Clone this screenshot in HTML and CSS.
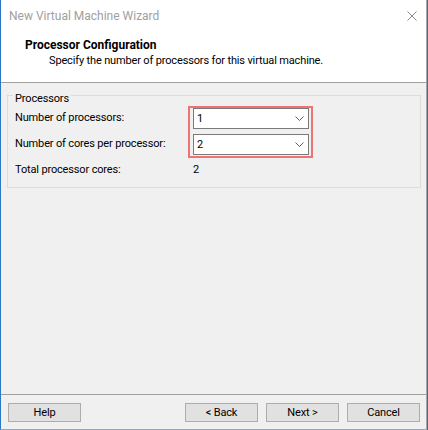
FILE: index.html
```html
<!DOCTYPE html>
<html>
<head>
<meta charset="utf-8">
<link rel="stylesheet" href="styles.css">
</head>
<body>
<div class="window">
  <div class="titlebar">
    <span class="title">New Virtual Machine Wizard</span>
    <svg class="close" width="10" height="10" viewBox="0 0 10 10"><path d="M0.5 0.5L9.5 9.5M9.5 0.5L0.5 9.5" stroke="#8a8a8a" stroke-width="1" fill="none"/></svg>
  </div>
  <div class="header">
    <div class="h-title">Processor Configuration</div>
    <div class="h-sub">Specify the number of processors for this virtual machine.</div>
  </div>
  <div class="content">
    <fieldset class="group">
      <legend>Processors</legend>
      <div class="grid">
        <div class="label">Number of processors:</div>
        <div class="combos">
          <div class="combo"><span>1</span><svg width="9" height="5" viewBox="0 0 9 5"><path d="M0.5 0.5L4.5 4.5L8.5 0.5" stroke="#606060" fill="none"/></svg></div>
          <div class="combo"><span>2</span><svg width="9" height="5" viewBox="0 0 9 5"><path d="M0.5 0.5L4.5 4.5L8.5 0.5" stroke="#606060" fill="none"/></svg></div>
          <div class="highlight"></div>
        </div>
        <div class="label">Number of cores per processor:</div>
        <div class="label">Total processor cores:</div>
        <div class="value">2</div>
      </div>
    </fieldset>
  </div>
  <div class="footer">
    <button class="btn">Help</button>
    <div class="spacer"></div>
    <button class="btn">&lt; Back</button>
    <button class="btn">Next &gt;</button>
    <button class="btn">Cancel</button>
  </div>
</div>
</body>
</html>
```
FILE: styles.css
```css
html, body {
  margin: 0;
  padding: 0;
  background: #5a6470;
}
body {
  font-family: Roboto, "Segoe UI", sans-serif;
  font-size: 11px;
  letter-spacing: -0.15px;
  color: #000;
}
.window {
  width: 427px;
  height: 430px;
  box-sizing: border-box;
  border-left: 1px solid #2a78c6;
  border-right: 1px solid #a8a8a8;
  border-bottom: 1px solid #9aa6b4;
  background: #f0f0f0;
  display: flex;
  flex-direction: column;
}
.titlebar {
  height: 31px;
  background: #fff;
  display: flex;
  align-items: center;
  padding: 0 9px 0 8px;
  flex: none;
}
.title {
  color: #a0a0a0;
  flex: 1;
  font-size: 12px;
  letter-spacing: 0;
  line-height: 16px;
  padding-top: 1px;
}
.close {
  display: block;
  margin-top: 1px;
}
.header {
  background: #fff;
  border-bottom: 1px solid #a0a0a0;
  padding-top: 6px;
  flex: none;
  height: 45px;
}
.h-title {
  font-weight: bold;
  font-size: 12px;
  letter-spacing: 0;
  line-height: 16px;
  padding-left: 24px;
}
.h-sub {
  line-height: 16px;
  padding-left: 48px;
}
.content {
  flex: 1;
  padding: 2px 0 0 6px;
}
.group {
  margin: 0;
  width: 414px;
  box-sizing: border-box;
  border: 1px solid #dcdcdc;
  padding: 0 7px 4px 7px;
}
.group legend {
  padding: 7px 2px 0 2px;
  margin-left: -2px;
  line-height: 14px;
}
.grid {
  display: grid;
  grid-template-columns: 178px 1fr;
  grid-template-rows: 26px 26px 26px;
  margin-top: -1px;
}
.label {
  line-height: 26px;
  grid-column: 1;
  white-space: nowrap;
}
.combos {
  grid-column: 2;
  grid-row: 1 / span 2;
  position: relative;
  width: 116px;
  display: flex;
  flex-direction: column;
  gap: 5px;
  padding-top: 3px;
}
.combo {
  height: 21px;
  box-sizing: border-box;
  border: 1px solid #7a7a7a;
  background: #fff;
  display: flex;
  align-items: center;
  justify-content: space-between;
  padding: 0 4px 0 3px;
  line-height: 16px;
}
.combo svg {
  display: block;
}
.highlight {
  position: absolute;
  left: -5px;
  top: 1px;
  width: 125px;
  height: 52px;
  box-sizing: border-box;
  border: 2px solid #ef7373;
  pointer-events: none;
}
.value {
  grid-column: 2;
  grid-row: 3;
  line-height: 26px;
}
.footer {
  flex: none;
  height: 35px;
  box-sizing: border-box;
  border-top: 1px solid #a0a0a0;
  display: flex;
  align-items: flex-start;
  gap: 8px;
  padding: 8px 6px 0 7px;
}
.spacer {
  flex: 1;
}
.btn {
  width: 73px;
  height: 19px;
  box-sizing: border-box;
  border: 1px solid #adadad;
  background: #e1e1e1;
  font-family: inherit;
  font-size: 11px;
  letter-spacing: -0.15px;
  color: #000;
  padding: 0;
  line-height: 16px;
}
```
